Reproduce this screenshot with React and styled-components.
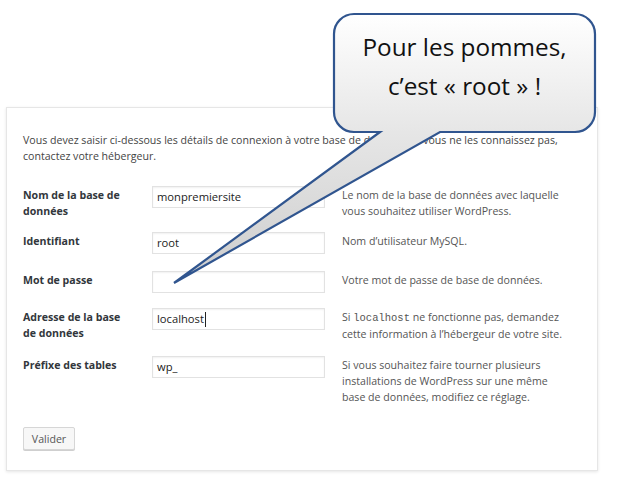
import React from "react";
import styled, { createGlobalStyle } from "styled-components";

const Global = createGlobalStyle`
  html, body { margin: 0; padding: 0; background: #ffffff; }
  body { font-family: "Open Sans", "Noto Sans", sans-serif; }
`;

const Page = styled.div`
  position: relative;
  width: 630px;
  height: 489px;
  overflow: hidden;
  padding-top: 107px;
  box-sizing: border-box;
`;

const Card = styled.div`
  margin-left: 6px;
  width: 592px;
  box-sizing: border-box;
  background: #fff;
  border: 1px solid #e6e6e6;
  box-shadow: 0 1px 3px rgba(0, 0, 0, 0.1);
  padding: 24px 16px 20px 16px;
  font-size: 10.6px;
  line-height: 16px;
  color: #444;
`;

const Intro = styled.p`
  margin: 0 0 22px 0;
`;

const Row = styled.div`
  display: grid;
  grid-template-columns: 112px 173px 1fr;
  column-gap: 17px;
  align-items: start;
  margin-bottom: ${(p) => p.$gap}px;
`;

const Label = styled.div`
  padding-top: 1px;
  font-weight: 700;
  color: #32373c;
`;

const Field = styled.div`
  height: 22px;
  box-sizing: border-box;
  border: 1px solid #e2e2e2;
  box-shadow: inset 0 1px 2px rgba(0, 0, 0, 0.06);
  background: #fff;
  padding: 0 4px;
  display: flex;
  align-items: center;
  font-size: 11.2px;
  color: #222;
  white-space: nowrap;
`;

const Caret = styled.span`
  display: inline-block;
  width: 1px;
  height: 15px;
  background: #222;
  margin-left: 1px;
`;

const Desc = styled.div`
  padding-top: 1px;
  color: #555;
  white-space: nowrap;
`;

const Code = styled.code`
  font-family: "Liberation Mono", "DejaVu Sans Mono", monospace;
  font-size: 10.5px;
  color: #555;
`;

const Button = styled.button`
  display: block;
  width: 52px;
  height: 23px;
  box-sizing: border-box;
  margin: 0;
  padding: 0;
  border: 1px solid #d6d6d6;
  border-radius: 2px;
  background: #f7f7f7;
  box-shadow: 0 1px 0 #cfcfcf;
  font-family: "Open Sans", "Noto Sans", sans-serif;
  font-size: 10.6px;
  color: #555;
`;

const CalloutLayer = styled.div`
  position: absolute;
  left: 0;
  top: 0;
  width: 630px;
  height: 489px;
  pointer-events: none;
`;

const CalloutSvg = styled.svg`
  position: absolute;
  left: 0;
  top: 0;
`;

const CalloutText = styled.div`
  position: absolute;
  left: 334px;
  top: 27px;
  width: 261px;
  text-align: center;
  font-family: "Open Sans", "Noto Sans", sans-serif;
  font-size: 24.3px;
  line-height: 39px;
  color: #111;
`;

const rows = [
  {
    label: ["Nom de la base de", "données"],
    value: "monpremiersite",
    gap: 13,
    desc: ["Le nom de la base de données avec laquelle", "vous souhaitez utiliser WordPress."],
  },
  { label: ["Identifiant"], value: "root", gap: 17, desc: ["Nom d’utilisateur MySQL."] },
  { label: ["Mot de passe"], value: "", gap: 15, desc: ["Votre mot de passe de base de données."] },
  {
    label: ["Adresse de la base", "de données"],
    value: "localhost",
    caret: true,
    gap: 14,
    desc: [
      <>Si <Code>localhost</Code> ne fonctionne pas, demandez</>,
      "cette information à l’hébergeur de votre site.",
    ],
  },
  {
    label: ["Préfixe des tables"],
    value: "wp_",
    gap: 22,
    desc: [
      "Si vous souhaitez faire tourner plusieurs",
      "installations de WordPress sur une même",
      "base de données, modifiez ce réglage.",
    ],
  },
];

const lines = (arr) =>
  arr.map((l, i) => (
    <React.Fragment key={i}>
      {i > 0 && <br />}
      {l}
    </React.Fragment>
  ));

export default function App() {
  return (
    <>
      <Global />
      <Page>
        <Card>
          <Intro>
            Vous devez saisir ci-dessous les détails de connexion à votre base de données. Si vous ne les connaissez pas,
            <br />
            contactez votre hébergeur.
          </Intro>
          {rows.map((r, i) => (
            <Row key={i} $gap={r.gap}>
              <Label>{lines(r.label)}</Label>
              <Field>
                {r.value}
                {r.caret && <Caret />}
              </Field>
              <Desc>{lines(r.desc)}</Desc>
            </Row>
          ))}
          <Button>Valider</Button>
        </Card>
        <CalloutLayer>
          <CalloutSvg width="630" height="489" viewBox="0 0 630 489">
            <defs>
              <linearGradient id="cfill" x1="0" y1="14" x2="0" y2="283" gradientUnits="userSpaceOnUse">
                <stop offset="0" stopColor="#ffffff" />
                <stop offset="0.44" stopColor="#e6e6e6" />
                <stop offset="1" stopColor="#cdcdcd" />
              </linearGradient>
            </defs>
            <path
              d="M354 14 H575 A20 20 0 0 1 595 34 V112 A20 20 0 0 1 575 132 H440 L174 283 L380 132 H354 A20 20 0 0 1 334 112 V34 A20 20 0 0 1 354 14 Z"
              fill="url(#cfill)"
              stroke="#30558f"
              strokeWidth="2.2"
              strokeLinejoin="miter"
            />
          </CalloutSvg>
          <CalloutText>
            Pour les pommes,
            <br />
            c’est « root » !
          </CalloutText>
        </CalloutLayer>
      </Page>
    </>
  );
}
